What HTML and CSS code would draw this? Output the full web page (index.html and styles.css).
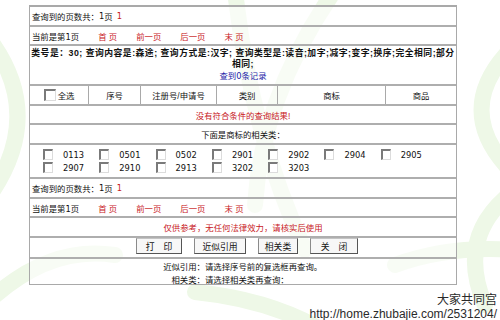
FILE: index.html
```html
<!DOCTYPE html>
<html>
<head>
<meta charset="utf-8">
<link rel="stylesheet" href="styles.css">
</head>
<body>
<svg class="bg" width="500" height="320" viewBox="0 0 500 320">
  <g fill="none" stroke="#eef8e7" stroke-width="16" stroke-linecap="round">
    <path d="M-10 40 Q45 115 -10 195"/>
    <path d="M-10 300 Q50 245 115 255"/>
    <path d="M235 -10 Q250 130 305 250"/>
    <path d="M335 -10 Q262 95 255 205"/>
    <path d="M515 45 Q448 110 515 175"/>
    <path d="M515 190 Q455 235 485 305"/>
    <path d="M195 292 Q275 300 330 335"/>
    <path d="M395 265 Q450 245 515 250"/>
  </g>
</svg>
<div class="tbl">
  <div class="row r18 left">查询到的页数共：<span class="num">1</span>页<span class="red num pg">1</span></div>
  <div class="row r19 left pager"><span>当前是第<span class="num">1</span>页</span><span class="red">首 页</span><span class="red">前一页</span><span class="red">后一页</span><span class="red">末 页</span></div>
  <div class="row r40 cond">
    <div class="b">类号是：30; 查询内容是:森途; 查询方式是:汉字; 查询类型是:读音;加字;减字;变字;换序;完全相同;部分<br>相同;</div>
    <div class="blue">查到<span class="num">0</span>条记录</div>
  </div>
  <div class="row r20 head">
    <div class="cell"><span class="cb big"></span>全选</div>
    <div class="cell">序号</div>
    <div class="cell">注册号/申请号</div>
    <div class="cell">类别</div>
    <div class="cell">商标</div>
    <div class="cell">商品</div>
  </div>
  <div class="row r19 center red">没有符合条件的查询结果!</div>
  <div class="row r20 center">下面是商标的相关类：</div>
  <div class="row r34 classes">
    <div class="grid">
      <div class="it"><span class="cb"></span><span class="num">0113</span></div>
      <div class="it"><span class="cb"></span><span class="num">0501</span></div>
      <div class="it"><span class="cb"></span><span class="num">0502</span></div>
      <div class="it"><span class="cb"></span><span class="num">2901</span></div>
      <div class="it"><span class="cb"></span><span class="num">2902</span></div>
      <div class="it"><span class="cb"></span><span class="num">2904</span></div>
      <div class="it"><span class="cb"></span><span class="num">2905</span></div>
      <div class="it"><span class="cb"></span><span class="num">2907</span></div>
      <div class="it"><span class="cb"></span><span class="num">2910</span></div>
      <div class="it"><span class="cb"></span><span class="num">2913</span></div>
      <div class="it"><span class="cb"></span><span class="num">3202</span></div>
      <div class="it"><span class="cb"></span><span class="num">3203</span></div>
    </div>
  </div>
  <div class="row r20 left">查询到的页数共：<span class="num">1</span>页<span class="red num pg">1</span></div>
  <div class="row r19 left pager"><span>当前是第<span class="num">1</span>页</span><span class="red">首 页</span><span class="red">前一页</span><span class="red">后一页</span><span class="red">末 页</span></div>
  <div class="row r20 center red">仅供参考，无任何法律效力，请核实后使用</div>
  <div class="row r21 btns">
    <span class="btn w46">打　印</span>
    <span class="btn w52">近似引用</span>
    <span class="btn w40">相关类</span>
    <span class="btn w48">关　闭</span>
  </div>
  <div class="row r27 notes">
    <span class="lbl">近似引用：</span><span>请选择序号前的复选框再查询。</span>
    <span class="lbl">相关类：</span><span>请选择相关类再查询：</span>
  </div>
</div>
<div class="mark">
  <div class="mk1">大家共同宫</div>
  <div class="mk2">http://home.zhubajie.com/2531204/</div>
</div>
</body>
</html>
```

FILE: styles.css
```css
html, body {
  margin: 0;
  padding: 0;
  background: #fff;
}
body {
  width: 500px;
  height: 320px;
  overflow: hidden;
  position: relative;
  font-family: "Liberation Sans", "Noto Sans CJK SC", sans-serif;
  font-size: 8.4px;
  color: #111;
}
.bg {
  position: absolute;
  left: 0;
  top: 0;
  z-index: 0;
}
.tbl {
  position: relative;
  z-index: 1;
  margin: 5px 0 0 29px;
  width: 428px;
  box-sizing: border-box;
  border: 1px solid #a9a9a9;
  border-top-width: 2px;
  background: rgba(255, 255, 255, 0.6);
}
.row {
  box-sizing: border-box;
  border-top: 2px solid #aeaeae;
  display: flex;
  align-items: center;
}
.row:first-child {
  border-top: none;
}
.r18 { height: 18px; }
.r19 { height: 19px; }
.r20 { height: 20px; }
.r21 { height: 21px; }
.r27 { height: 27px; }
.r34 { height: 34px; }
.r40 { height: 40px; }
.left {
  padding-left: 2px;
}
.center {
  justify-content: center;
}
.num {
  font-family: "DejaVu Sans", sans-serif;
  font-size: 8.3px;
}
.pg {
  margin-left: 4px;
}
.red {
  color: #c8201e;
}
.blue {
  color: #1c1ca8;
}
.pager {
  gap: 19px;
}
.cond {
  flex-direction: column;
  justify-content: center;
  text-align: center;
  line-height: 11.5px;
}
.cond .b {
  font-weight: bold;
  font-size: 8.8px;
  letter-spacing: 0.5px;
  white-space: nowrap;
}
.head {
  display: grid;
  grid-template-columns: 58px 52px 76px 61px 108px 1fr;
  align-items: stretch;
}
.head .cell {
  display: flex;
  align-items: center;
  justify-content: center;
  border-left: 1px solid #a9a9a9;
}
.head .cell:first-child {
  border-left: none;
}
.cb {
  display: inline-block;
  box-sizing: border-box;
  width: 10px;
  height: 11px;
  background: #fff;
  border-top: 2px solid #7a7a7a;
  border-left: 2px solid #7a7a7a;
  border-right: 1px solid #dcdcdc;
  border-bottom: 1px solid #dcdcdc;
}
.cb.big {
  width: 12px;
  height: 12px;
  margin-right: 2px;
}
.grid {
  display: grid;
  grid-template-columns: repeat(7, 56.3px);
  grid-auto-rows: 13px;
  padding-left: 13px;
}
.it {
  display: flex;
  align-items: center;
  gap: 10px;
}
.btns {
  justify-content: center;
  align-items: flex-start;
  padding-left: 8px;
}
.btn {
  box-sizing: border-box;
  height: 16px;
  display: inline-flex;
  align-items: center;
  justify-content: center;
  background: #f7f7f7;
  border-top: 1px solid #c4c4c4;
  border-left: 1px solid #8a8a8a;
  border-right: 1px solid #555;
  border-bottom: 1px solid #555;
  font-size: 8.8px;
  margin-right: 12px;
}
.btn:last-child { margin-right: 0; }
.w46 { width: 46px; }
.w52 { width: 52px; }
.w40 { width: 40px; }
.w48 { width: 48px; }
.notes {
  display: grid;
  grid-template-columns: 175px 1fr;
  align-content: start;
  grid-auto-rows: 13px;
  padding-top: 0;
  align-items: center;
}
.notes .lbl {
  text-align: right;
}
.mark {
  position: absolute;
  right: 3px;
  bottom: -1px;
  z-index: 2;
  text-align: right;
  color: #2a2a2a;
}
.mk1 {
  font-family: "Noto Sans CJK SC", sans-serif;
  font-size: 12px;
  line-height: 18px;
}
.mk2 {
  font-family: "Liberation Sans", sans-serif;
  font-size: 12px;
  line-height: 13px;
}
```
